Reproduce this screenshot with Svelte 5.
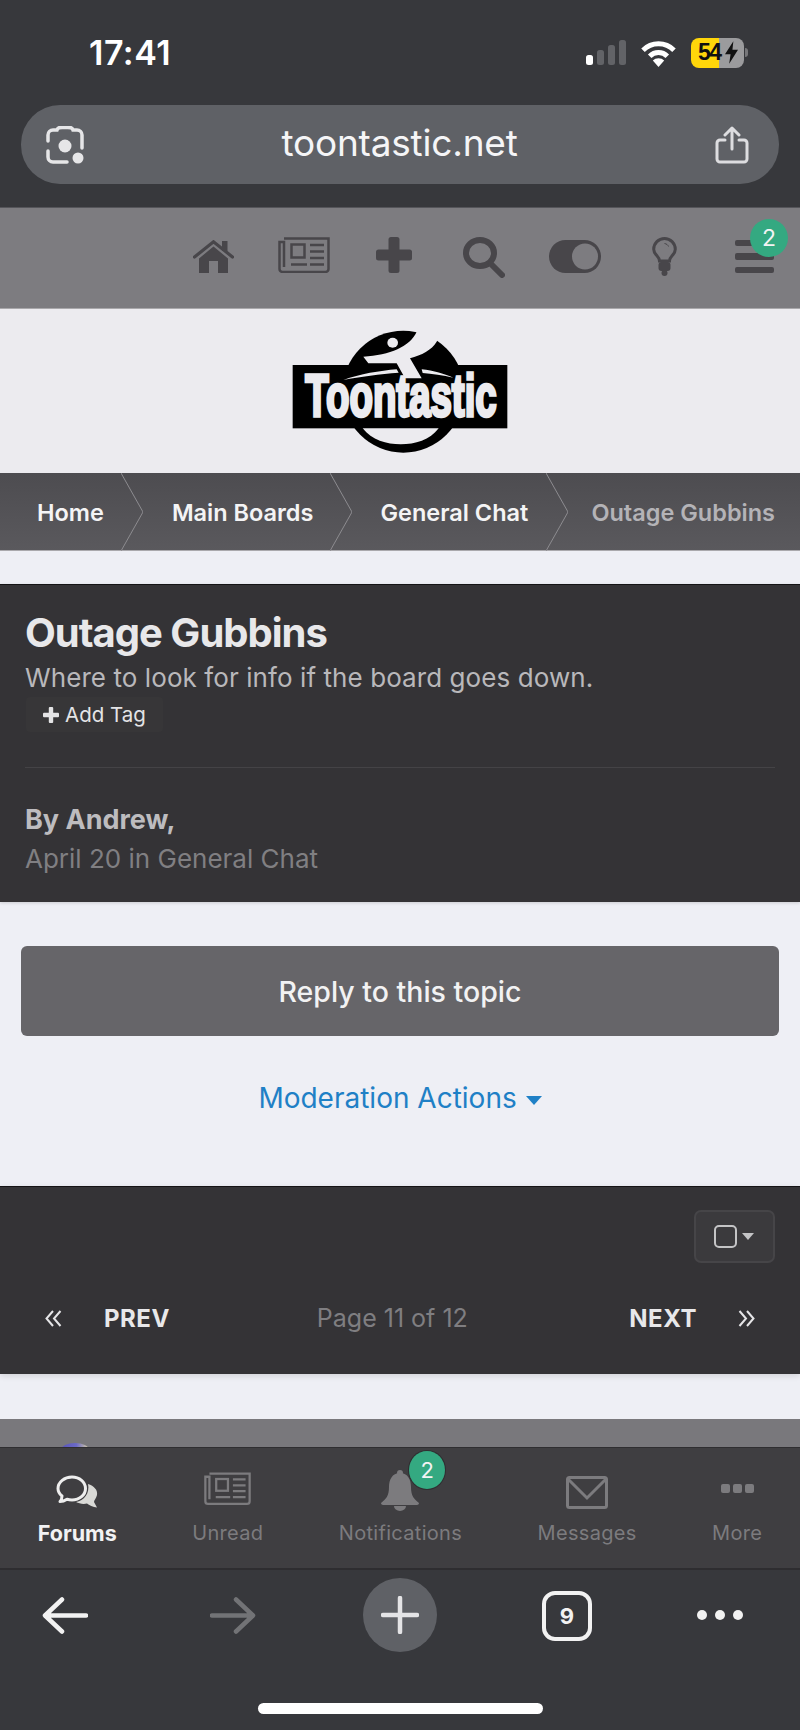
<script>
	const crumbs = [
		{ label: 'Home', left: 37, right: 17 },
		{ label: 'Main Boards', left: 51, right: 17 },
		{ label: 'General Chat', left: 50, right: 18 },
		{ label: 'Outage Gubbins', left: 45, right: 0, current: true }
	];
</script>

{#snippet paper()}
	<svg class="ico paper" viewBox="0 0 52 36" fill="none" stroke="currentColor" stroke-width="2.5">
		<path d="M6 1.5H50.5V32a3 3 0 0 1-3 3H4.5a3 3 0 0 1-3-3V5H6V30" />
		<rect x="13.5" y="7.5" width="13" height="13" />
		<path d="M32 8H46M32 14.5H46M32 21H46M13 27.5H29M32 27.5H46" />
	</svg>
{/snippet}

{#snippet badge(cls)}
	<span class="badge {cls}">2</span>
{/snippet}

<div class="screen">
	<header class="chrome">
		<div class="status">
			<span class="time">17:41</span>
			<div class="signal">
				<i class="on h1"></i><i class="h2"></i><i class="h3"></i><i class="h4"></i>
			</div>
			<svg class="wifi" viewBox="0 0 35 28" fill="none" stroke="#fff" stroke-width="5">
				<path d="M2 11.2A22 22 0 0 1 33 11.2" />
				<path d="M8.7 17.2A12.5 12.5 0 0 1 26.3 17.2" />
				<path d="M17.5 28L11.8 21.6A8 8 0 0 1 23.2 21.6Z" fill="#fff" stroke="none" />
			</svg>
			<div class="battery">
				<span class="pct">54</span>
				<svg class="bolt" viewBox="0 0 14 24"><path d="M9 0L0 14H6L4.500 24L14 9H8Z" fill="#111" /></svg>
			</div>
			<span class="nub"></span>
		</div>
		<div class="urlbar">
			<svg class="lens" viewBox="0 0 38 38" fill="none" stroke="#e6e6e8" stroke-width="3.500" stroke-linecap="round">
				<path d="M2 15V9a5 5 0 0 1 5-5H11C12 1 14 1.500 19 1.500S26 1 27 4H31a5 5 0 0 1 5 5V22" />
				<path d="M2 25V31a5 5 0 0 0 5 5H21" />
				<circle cx="19" cy="20" r="6.500" fill="#e6e6e8" stroke="none" />
				<circle cx="32" cy="32" r="5.500" fill="#e6e6e8" stroke="none" />
			</svg>
			<span class="host">toontastic.net</span>
			<svg class="share" viewBox="0 0 34 38" fill="none" stroke="#dddde0" stroke-width="3" stroke-linecap="round" stroke-linejoin="round">
				<path d="M17 2V23M10 9L17 2L24 9" />
				<path d="M10 14H5a3 3 0 0 0-3 3V33a3 3 0 0 0 3 3H29a3 3 0 0 0 3-3V17a3 3 0 0 0-3-3H24" />
			</svg>
		</div>
	</header>

	<nav class="topnav">
		<span class="cell">
			<svg class="ico home" viewBox="0 0 41 33">
				<path d="M1.500 17L20.500 1.800L39.500 17" fill="none" stroke="currentColor" stroke-width="3.200" stroke-linecap="round" />
				<rect x="29" y="1" width="5.500" height="10" fill="currentColor" />
				<path d="M6 33V18.500L20.500 6.500L35 18.500V33H25V21H16V33Z" fill="currentColor" />
			</svg>
		</span>
		<span class="cell">{@render paper()}</span>
		<span class="cell">
			<svg class="ico plus" viewBox="0 0 36 36" fill="currentColor">
				<rect x="12.500" width="11" height="36" rx="2.500" />
				<rect y="12.500" width="36" height="11" rx="2.500" />
			</svg>
		</span>
		<span class="cell">
			<svg class="ico search" viewBox="0 0 42 41" fill="none" stroke="currentColor" stroke-width="6" stroke-linecap="round">
				<ellipse cx="17" cy="16" rx="14" ry="13" />
				<path d="M28 27L39 38" />
			</svg>
		</span>
		<span class="cell">
			<svg class="ico toggle" viewBox="0 0 52 33">
				<rect width="52" height="33" rx="16.500" fill="currentColor" />
				<circle cx="36" cy="16.500" r="13" fill="#7d7c80" />
			</svg>
		</span>
		<span class="cell">
			<svg class="ico bulb" viewBox="0 0 25 39">
				<path d="M7.500 24C7.500 19 1.700 18 1.700 12.300A10.800 10.800 0 0 1 23.300 12.300C23.300 18 17.500 19 17.500 24Z" fill="none" stroke="currentColor" stroke-width="3" />
				<path d="M12.500 6.500C14.500 6.800 16 8 16.500 9.500" fill="none" stroke="currentColor" stroke-width="1" />
				<rect x="6.500" y="25" width="12" height="9" rx="3" fill="currentColor" />
				<rect x="9.500" y="33" width="6" height="6" rx="3" fill="currentColor" />
			</svg>
		</span>
		<span class="cell menu">
			<span class="bars"><i></i><i></i><i></i></span>
			{@render badge('top')}
		</span>
	</nav>

	<div class="logo-band">
		<svg class="logo" viewBox="0 0 900 510">
			<circle cx="490" cy="275" r="183" fill="#000" />
			<rect x="158" y="195" width="644" height="190" fill="#000" />
			<path d="M530 95C510 140 450 165 370 170L385 190H470L495 235H545L510 175C545 165 575 150 590 125L620 60L540 50Z" fill="#ecebef" />
			<ellipse cx="458" cy="128" rx="16" ry="15" fill="#ecebef" />
			<path d="M310 240C360 222 420 212 470 208L476 218C420 222 360 230 310 240Z" fill="#ecebef" />
			<path d="M545 208C580 212 615 222 640 233C610 226 575 222 548 219Z" fill="#ecebef" />
			<path d="M368 385H596C570 420 525 433 482 433C440 433 395 420 368 385Z" fill="#ecebef" />
			<text class="logo-text" transform="translate(196 349) scale(0.655 1)">Toontastic</text>
		</svg>
	</div>

	<ul class="crumbs">
		{#each crumbs as c, i}
			<li class:current={c.current} class="crumb" style="padding-left:{c.left}px;padding-right:{c.right}px">
				{c.label}
				{#if i < crumbs.length - 1}
					<svg class="sep" viewBox="0 0 22 78" fill="none" stroke="#8d8c90" stroke-width="1"><path d="M0 0L22 39L0 78" /></svg>
				{/if}
			</li>
		{/each}
	</ul>

	<section class="panel head">
		<h1>Outage Gubbins</h1>
		<p class="desc">Where to look for info if the board goes down.</p>
		<button class="tag">
			<svg viewBox="0 0 16 16" fill="currentColor"><rect x="5.800" width="4.400" height="16" rx="1" /><rect y="5.800" width="16" height="4.400" rx="1" /></svg>
			Add Tag
		</button>
		<hr />
		<div class="by">By Andrew,</div>
		<div class="when">April 20 in General Chat</div>
	</section>

	<div class="actions">
		<button class="reply">Reply to this topic</button>
		<div class="mod">Moderation Actions <i class="caret"></i></div>
	</div>

	<section class="panel pager">
		<div class="check-row">
			<div class="check-btn"><span class="box"></span><i class="mini-caret"></i></div>
		</div>
		<div class="pages">
			<svg class="dbl" viewBox="0 0 17 17" fill="none" stroke="#e6e6e8" stroke-width="2"><path d="M8 1L1.500 8.500L8 16M15.500 1L9 8.500L15.500 16" /></svg>
			<span class="pg prev">PREV</span>
			<span class="info">Page 11 of 12</span>
			<span class="pg next">NEXT</span>
			<svg class="dbl" viewBox="0 0 17 17" fill="none" stroke="#e6e6e8" stroke-width="2"><path d="M1.500 1L8 8.500L1.500 16M9 1L15.500 8.500L9 16" /></svg>
		</div>
	</section>

	<div class="gap"></div>
	<div class="strip"><span class="peek"></span></div>

	<nav class="tabs">
		<div class="tab active">
			<div class="tab-ico">
				<svg class="chat" viewBox="0 0 42 33">
					<path d="M32 9C38 11 42 15 41 20C40.500 23 38 25 38 27L41 32.500C37 32 33 30 31 28.500C27 29.500 23 28.500 20 27C28 26 34 18 32 9Z" fill="#d9d9d6" />
					<path d="M16 2C23.500 2 29.500 7 29.500 13.500S23.500 25 16 25C14 25 12.500 24.800 11 24.200C9 25.500 6.500 26.500 4 26.500C5.500 25 6 23 6 21C3.500 19 2 16.500 2 13.500C2 7 8.500 2 16 2Z" fill="none" stroke="#eeeeee" stroke-width="3" stroke-linejoin="round" />
				</svg>
			</div>
			<span>Forums</span>
		</div>
		<div class="tab">
			<div class="tab-ico">{@render paper()}</div>
			<span>Unread</span>
		</div>
		<div class="tab">
			<div class="tab-ico">
				<svg class="bell" viewBox="0 0 38 41" fill="currentColor">
					<circle cx="19" cy="3" r="3" />
					<path d="M19 3C11 3 8 10 8 17C8 26 5 29 0 33C0 34 1 35 2 35H36C37 35 38 34 38 33C33 29 30 26 30 17C30 10 27 3 19 3Z" />
					<path d="M13 36A6 5 0 0 0 25 36Z" />
				</svg>
				{@render badge('bell-badge')}
			</div>
			<span>Notifications</span>
		</div>
		<div class="tab">
			<div class="tab-ico">
				<svg class="mail" viewBox="0 0 42 33" fill="none" stroke="currentColor" stroke-width="3">
					<rect x="1.500" y="1.500" width="39" height="30" rx="2" />
					<path d="M2 3L21 22L40 3" />
				</svg>
			</div>
			<span>Messages</span>
		</div>
		<div class="tab">
			<div class="tab-ico">
				<div class="more"><i></i><i></i><i></i></div>
			</div>
			<span>More</span>
		</div>
	</nav>

	<footer class="toolbar">
		<div class="tools">
			<svg class="arrow" viewBox="0 0 46 37" fill="none" stroke="#f2f2f2" stroke-width="4.500" stroke-linecap="round" stroke-linejoin="round">
				<path d="M44 18.500H4M20 2.500L3 18.500L20 34.500" />
			</svg>
			<svg class="arrow fwd" viewBox="0 0 46 37" fill="none" stroke="#727376" stroke-width="4.500" stroke-linecap="round" stroke-linejoin="round">
				<path d="M2 18.500H42M26 2.500L43 18.500L26 34.500" />
			</svg>
			<div class="newtab">
				<svg viewBox="0 0 38 38" stroke="#e4e4e6" stroke-width="4.500" stroke-linecap="round"><path d="M19 2V36M2 19H36" /></svg>
			</div>
			<div class="tabcount">9</div>
			<div class="dots"><i></i><i></i><i></i></div>
		</div>
		<div class="home-bar"></div>
	</footer>
</div>

<style>
	:global(body) {
		background: #37383c;
	}

	.screen {
		width: 800px;
		height: 1730px;
		display: flex;
		flex-direction: column;
		overflow: hidden;
		font-family: Inter, 'Liberation Sans', sans-serif;
		background: #eeeff5;
	}

	.chrome {
		height: 207px;
		background: #37383c;
		padding: 0 21px;
		box-sizing: border-box;
	}

	.status {
		height: 105px;
		display: flex;
		align-items: center;
		color: #fff;
	}

	.time {
		margin-left: 68px;
		font-size: 34px;
		font-weight: 600;
		letter-spacing: 0.5px;
		margin-right: auto;
	}

	.signal {
		display: flex;
		align-items: flex-end;
		gap: 3.500px;
		height: 25px;
	}

	.signal i {
		width: 7.500px;
		background: #626367;
		border-radius: 2.500px;
	}

	.signal .on {
		background: #fff;
	}

	.h1 { height: 10px; }
	.h2 { height: 15px; }
	.h3 { height: 20px; }
	.h4 { height: 25px; }

	.wifi {
		width: 35px;
		height: 28px;
		margin-left: 15px;
	}

	.battery {
		width: 53px;
		height: 30px;
		margin-left: 15px;
		border-radius: 8px;
		background: linear-gradient(90deg, #ffd60a 53%, #9b9b9d 53%);
		display: flex;
		align-items: center;
		padding-left: 7px;
		box-sizing: border-box;
	}

	.pct {
		font-family: 'Liberation Sans', sans-serif;
		font-size: 23px;
		font-weight: 700;
		letter-spacing: -1.5px;
		color: #111;
	}

	.bolt {
		width: 13px;
		height: 23px;
		margin-left: 4px;
	}

	.nub {
		width: 3px;
		height: 9px;
		margin-left: 1px;
		margin-right: 31px;
		background: #77777a;
		border-radius: 0 3px 3px 0;
	}

	.urlbar {
		height: 79px;
		border-radius: 39px;
		background: #5f6166;
		display: flex;
		align-items: center;
		justify-content: space-between;
		padding: 0 30px 0 25px;
	}

	.lens {
		width: 38px;
		height: 38px;
	}

	.host {
		font-size: 37px;
		color: #f5f5f7;
		letter-spacing: -0.2px;
		padding-bottom: 4px;
	}

	.share {
		width: 34px;
		height: 38px;
	}

	.topnav {
		height: 102px;
		background: #7d7c80;
		display: flex;
		justify-content: flex-end;
		padding: 0 0 3px;
		color: #48464a;
		border-top: 1px solid #55555a;
		border-bottom: 1px solid #a9a8ab;
		box-sizing: border-box;
	}

	.cell {
		width: 90.200px;
		display: flex;
		align-items: center;
		justify-content: center;
		position: relative;
	}

	.ico {
		display: block;
	}

	.home { width: 41px; height: 33px; }
	.paper { width: 52px; height: 36px; }
	.topnav .paper { margin-bottom: 3px; }
	.plus { width: 36px; height: 36px; margin-bottom: 3px; }
	.search { width: 42px; height: 41px; margin-top: 2px; }
	.toggle { width: 52px; height: 33px; }
	.bulb { width: 25px; height: 39px; }

	.bars {
		width: 39px;
		display: flex;
		flex-direction: column;
		gap: 7px;
	}

	.bars i {
		height: 6.500px;
		background: currentColor;
		border-radius: 2px;
	}

	.badge {
		position: absolute;
		width: 38px;
		height: 38px;
		border-radius: 50%;
		background: #34a981;
		color: #f3f3f3;
		font-size: 23px;
		display: flex;
		align-items: center;
		justify-content: center;
	}

	.badge.top {
		top: 11px;
		right: 12px;
	}

	.logo-band {
		height: 164px;
		background: #ecebef;
		display: flex;
		align-items: flex-start;
		justify-content: center;
	}

	.logo {
		width: 300px;
		height: 170px;
		margin: -9px 20px 0 0;
		flex: none;
	}

	.logo-text {
		font-family: 'Liberation Sans', sans-serif;
		font-weight: 700;
		font-size: 176px;
		fill: #ecebef;
		stroke: #ecebef;
		stroke-width: 10px;
	}

	.crumbs {
		list-style: none;
		margin: 0;
		padding: 0;
		height: 78px;
		display: flex;
		background: linear-gradient(180deg, #4d4c50, #5a595d);
		border-bottom: 1px solid #aaa9ad;
		box-sizing: border-box;
		white-space: nowrap;
		flex: none;
	}

	.crumb {
		position: relative;
		display: flex;
		align-items: center;
		padding-top: 1px;
		font-size: 23.500px;
		font-weight: 600;
		color: #f4f4f5;
	}

	.crumb.current {
		color: #b4b3b7;
	}

	.sep {
		position: absolute;
		right: -22px;
		top: 0;
		width: 22px;
		height: 78px;
	}

	.panel {
		background: #343336;
		border-top: 1px solid #151416;
		box-sizing: border-box;
		box-shadow: 0 1px 3px rgba(0, 0, 0, 0.15);
	}

	.head {
		margin-top: 33px;
		height: 318px;
		padding: 25px 25px 0;
		flex: none;
	}

	h1 {
		margin: 0;
		font-size: 40px;
		line-height: 46px;
		font-weight: 700;
		letter-spacing: -1px;
		color: #e8e8ea;
	}

	.desc {
		margin: 5px 0 0;
		font-size: 26px;
		line-height: 33px;
		color: #b9b8bb;
		letter-spacing: 0.08px;
	}

	.tag {
		display: flex;
		align-items: center;
		gap: 6px;
		margin: 3px 0 0 1px;
		width: 137px;
		height: 35px;
		padding: 0 0 0 17px;
		border: 0;
		border-radius: 4px;
		background: #373638;
		color: #e4e4e6;
		font: 20.500px Inter, sans-serif;
	}

	.tag svg {
		width: 16px;
		height: 16px;
	}

	hr {
		margin: 35px 0 0;
		border: 0;
		border-top: 1px solid #444346;
	}

	.by {
		margin-top: 34px;
		font-size: 27px;
		line-height: 36px;
		font-weight: 700;
		color: #bdbcbf;
	}

	.when {
		margin-top: 3px;
		font-size: 26px;
		line-height: 36px;
		color: #807f82;
	}

	.actions {
		height: 284px;
		padding: 44px 21px 0;
		box-sizing: border-box;
		flex: none;
	}

	.reply {
		display: block;
		width: 100%;
		height: 90px;
		border: 0;
		border-radius: 6px;
		background: #666569;
		color: #f2f2f3;
		font: 500 28.500px Inter, sans-serif;
	}

	.mod {
		margin-top: 44px;
		text-align: center;
		font-size: 28px;
		line-height: 36px;
		color: #1f80c6;
	}

	.caret {
		display: inline-block;
		margin-left: 1px;
		vertical-align: 3px;
		border-left: 8.500px solid transparent;
		border-right: 8.500px solid transparent;
		border-top: 9px solid #1f80c6;
	}

	.pager {
		height: 188px;
		flex: none;
		padding: 23px 25px 0 45px;
		box-shadow: 0 2px 6px rgba(0, 0, 0, 0.12);
	}

	.check-row {
		display: flex;
		justify-content: flex-end;
	}

	.check-btn {
		width: 81px;
		height: 53px;
		box-sizing: border-box;
		border: 2px solid #464548;
		border-radius: 7px;
		background: #3b3a3d;
		display: flex;
		align-items: center;
		padding-left: 18px;
		gap: 5px;
	}

	.box {
		width: 23px;
		height: 23px;
		box-sizing: border-box;
		border: 2px solid #c4c4c6;
		border-radius: 5px;
	}

	.mini-caret {
		border-left: 6.500px solid transparent;
		border-right: 6.500px solid transparent;
		border-top: 7px solid #c4c4c6;
	}

	.pages {
		display: flex;
		align-items: center;
		margin-top: 37px;
		height: 36px;
		padding-right: 20px;
	}

	.dbl {
		width: 17px;
		height: 17px;
	}

	.pg {
		font-size: 24px;
		font-weight: 700;
		color: #e8e8ea;
		letter-spacing: 0.5px;
	}

	.prev {
		margin-left: 42px;
	}

	.info {
		margin-left: 147px;
		margin-right: auto;
		font-size: 25px;
		color: #7f7e81;
	}

	.next {
		margin-right: 41px;
	}

	.gap {
		height: 45px;
		flex: none;
	}

	.strip {
		height: 28px;
		flex: none;
		background: #79787c;
		position: relative;
		overflow: hidden;
	}

	.peek {
		position: absolute;
		left: 61px;
		top: 24px;
		width: 28px;
		height: 14px;
		border-radius: 50%;
		background: linear-gradient(90deg, #5a55b8, #6b6ac8 55%, #d8cfa0);
	}

	.tabs {
		height: 123px;
		flex: none;
		background: #3f3e41;
		border-top: 1px solid #2f2e31;
		border-bottom: 2px solid #2e2d30;
		box-sizing: border-box;
		display: flex;
		justify-content: space-around;
		padding: 20px 0 0;
		color: #7c7b7e;
	}

	.tab {
		display: flex;
		flex-direction: column;
		align-items: center;
		font-size: 20px;
		line-height: 28px;
		letter-spacing: 0.3px;
	}

	.tab.active {
		color: #f2f2f3;
		font-weight: 700;
		font-size: 21.500px;
		letter-spacing: 0;
	}

	.tab-ico {
		height: 44px;
		margin-bottom: 7px;
		display: flex;
		align-items: center;
		justify-content: center;
		position: relative;
	}

	.tabs .paper {
		width: 47px;
		height: 33px;
		margin-bottom: 4px;
	}

	.chat { width: 42px; height: 33px; margin-top: 3px; }
	.bell { width: 38px; height: 41px; }
	.mail { width: 42px; height: 33px; margin-top: 4px; }

	.bell-badge {
		top: -17px;
		left: 28px;
		width: 36px;
		height: 38px;
		box-sizing: border-box;
		font-size: 22px;
		box-shadow: 0 0 0 1px #2f2e31;
	}

	.more {
		display: flex;
		gap: 3px;
		margin-bottom: 4px;
	}

	.more i {
		width: 9px;
		height: 9px;
		background: currentColor;
		border-radius: 2px;
	}

	.toolbar {
		flex: 1;
		background: #37383c;
		position: relative;
		padding-top: 8px;
	}

	.tools {
		display: flex;
		align-items: center;
		padding-left: 42px;
		height: 74px;
		gap: 105px;
	}

	.arrow {
		width: 46px;
		height: 37px;
		flex: none;
	}

	.fwd {
		margin-left: 17px;
	}

	.newtab {
		width: 74px;
		height: 74px;
		margin-left: 2px;
		border-radius: 50%;
		background: #5f6166;
		display: flex;
		align-items: center;
		justify-content: center;
		flex: none;
	}

	.newtab svg {
		width: 38px;
		height: 38px;
	}

	.tabcount {
		width: 50px;
		height: 50px;
		box-sizing: border-box;
		margin-top: 1px;
		border: 4px solid #f2f2f2;
		border-radius: 13px;
		color: #f2f2f2;
		font-size: 22px;
		font-weight: 700;
		display: flex;
		align-items: center;
		justify-content: center;
		flex: none;
	}

	.dots {
		display: flex;
		gap: 8px;
	}

	.dots i {
		width: 10px;
		height: 10px;
		border-radius: 50%;
		background: #f2f2f2;
	}

	.home-bar {
		width: 285px;
		height: 11px;
		margin: 51px auto 0;
		border-radius: 6px;
		background: #fff;
	}
</style>
